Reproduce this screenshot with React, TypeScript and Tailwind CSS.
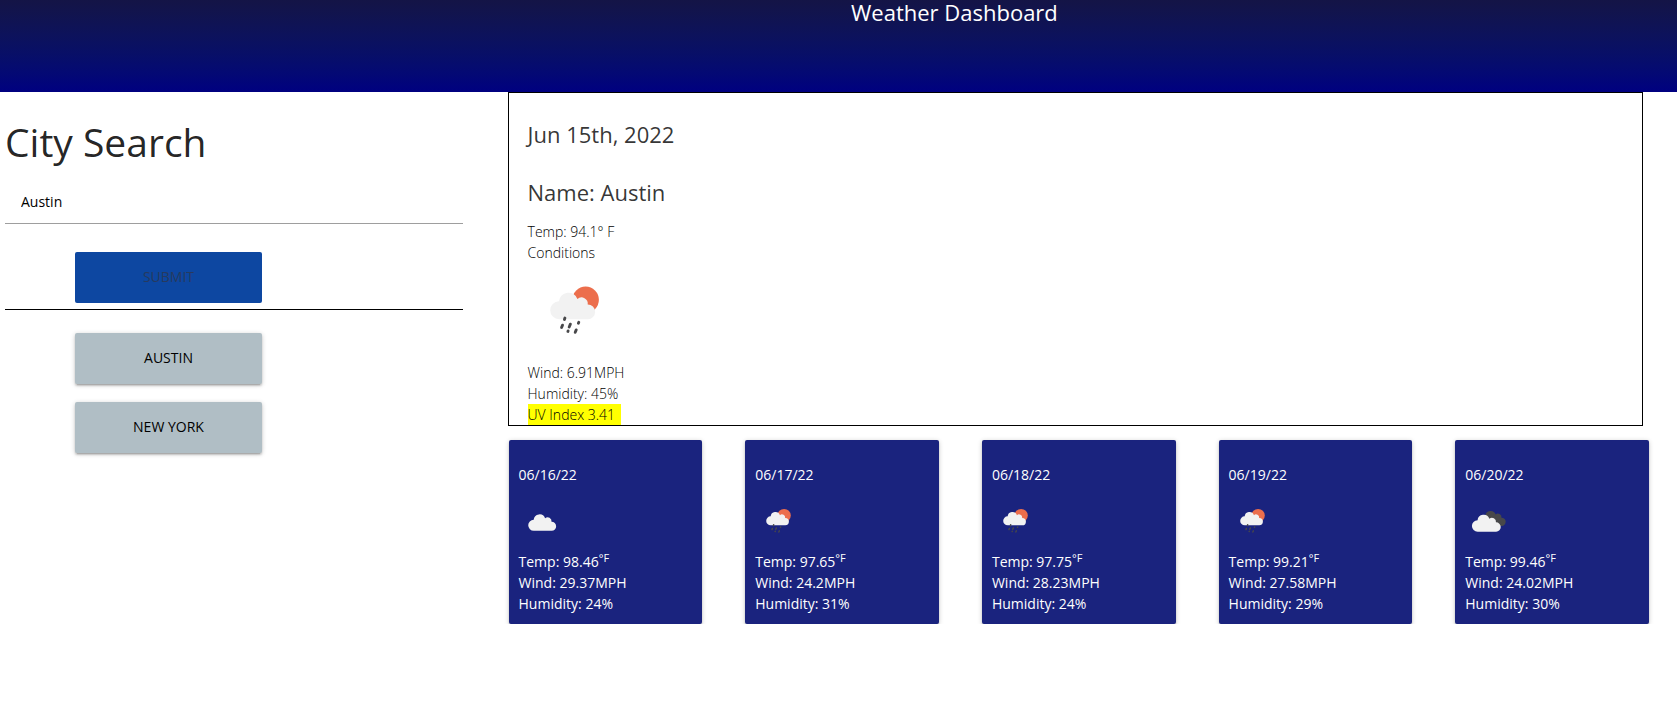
type IconKind = "cloud" | "rain" | "broken";

const CITIES = ["Austin", "New York"];

const FORECAST: {
  date: string;
  icon: IconKind;
  temp: string;
  wind: string;
  humidity: string;
}[] = [
  { date: "06/16/22", icon: "cloud", temp: "98.46", wind: "29.37", humidity: "24" },
  { date: "06/17/22", icon: "rain", temp: "97.65", wind: "24.2", humidity: "31" },
  { date: "06/18/22", icon: "rain", temp: "97.75", wind: "28.23", humidity: "24" },
  { date: "06/19/22", icon: "rain", temp: "99.21", wind: "27.58", humidity: "29" },
  { date: "06/20/22", icon: "broken", temp: "99.46", wind: "24.02", humidity: "30" },
];

function Cloud({ transform, fill = "#f2f2f2" }: { transform?: string; fill?: string }) {
  return (
    <path
      transform={transform}
      fill={fill}
      d="M31 57a9 9 0 0 1-.2-18 9.6 9.6 0 0 1 18.6-2.4 6.3 6.3 0 0 1 10.4 5.6A7.4 7.4 0 0 1 60 57Z"
    />
  );
}

function WeatherIcon({ kind, className }: { kind: IconKind; className: string }) {
  return (
    <svg viewBox="0 0 100 100" className={className} role="img" aria-label={kind}>
      {kind === "rain" && (
        <>
          <circle cx="58.2" cy="37.2" r="13.4" fill="#ec6e4c" />
          <Cloud transform="translate(.5 -.3)" />
          <g stroke="#48484a" strokeWidth="2.9" strokeLinecap="round">
            <path d="M37.3 55.6l-.5 1.4M34.9 62.8l-1 2.4M42.8 61.8l-1.2 2.8M51.3 59.9l-.4 1M40.5 68.6l-.2.6M48.7 67.6l-1 2.4" />
          </g>
        </>
      )}
      {kind === "cloud" && <Cloud transform="translate(-8.5 -2.5) scale(1.23)" />}
      {kind === "broken" && (
        <>
          <Cloud transform="translate(6 -6) scale(1.12)" fill="#48484a" />
          <Cloud transform="translate(-14 -3) scale(1.27)" />
        </>
      )}
    </svg>
  );
}

export default function App() {
  return (
    <div className="bg-white font-['Open_Sans','Noto_Sans',sans-serif] text-sm leading-[21px] text-black/87">
      <header className="h-[92px] bg-linear-to-b from-[#141446] to-[#000080] pl-[851px]">
        <h1 className="text-[22px] leading-6 text-white">Weather Dashboard</h1>
      </header>

      <main className="flex">
        <section className="w-[28%] shrink-0 pr-[7px] pl-[5px]">
          <h2 className="pt-[22px] pb-0.5 text-[39px] leading-[56px]">City Search</h2>
          <form
            className="border-b border-black pt-2 pb-1.5"
            onSubmit={(e) => e.preventDefault()}
          >
            <input
              type="text"
              aria-label="City"
              defaultValue="Austin"
              className="block h-11 w-full border-b border-[#9e9e9e] px-4 text-sm text-black outline-none"
            />
            <button
              type="submit"
              className="mt-7 ml-[70px] block h-[51px] w-[187px] rounded-xs bg-[#0d47a1] pb-0.5 text-sm text-[#263a5e] uppercase"
            >
              Submit
            </button>
          </form>
          <div className="mt-[23px] ml-[70px] flex w-[187px] flex-col gap-[18px]">
            {CITIES.map((city) => (
              <button
                key={city}
                type="button"
                className="h-[51px] rounded-xs bg-[#b0bec5] pb-0.5 text-sm text-black uppercase shadow-[0_2px_2px_0_rgba(0,0,0,0.14),0_3px_1px_-2px_rgba(0,0,0,0.12),0_1px_5px_0_rgba(0,0,0,0.2)]"
              >
                {city}
              </button>
            ))}
          </div>
        </section>

        <section className="min-w-0 flex-1 pr-7 pl-[38px]">
          <article className="mr-1.5 border border-black pl-[19px] font-light text-black">
            <h3 className="pt-[26px] text-[22px] leading-[30px] font-normal text-black/80">
              Jun 15th, 2022
            </h3>
            <h3 className="pt-7 pb-3.5 text-[22px] leading-[30px] font-normal text-black/80">
              Name: Austin
            </h3>
            <p>Temp: 94.1° F</p>
            <p>Conditions</p>
            <WeatherIcon kind="rain" className="block size-[99px]" />
            <p>Wind: 6.91MPH</p>
            <p>Humidity: 45%</p>
            <p className="w-fit bg-[#ffff00] pr-1.5">UV Index 3.41</p>
          </article>

          <ul className="mt-3.5 grid grid-cols-5 gap-[43px] pl-px">
            {FORECAST.map((day) => (
              <li
                key={day.date}
                className="rounded-xs bg-[#1a237e] px-2.5 pt-6 pb-2.5 text-white shadow-[0_2px_2px_0_rgba(0,0,0,0.14),0_3px_1px_-2px_rgba(0,0,0,0.12),0_1px_5px_0_rgba(0,0,0,0.2)]"
              >
                <p>{day.date}</p>
                <WeatherIcon kind={day.icon} className="mt-3 mb-1 block size-[50px]" />
                <p>
                  Temp: {day.temp}
                  <sup className="text-[11px] leading-none">°F</sup>
                </p>
                <p>Wind: {day.wind}MPH</p>
                <p>Humidity: {day.humidity}%</p>
              </li>
            ))}
          </ul>
        </section>
      </main>
    </div>
  );
}
